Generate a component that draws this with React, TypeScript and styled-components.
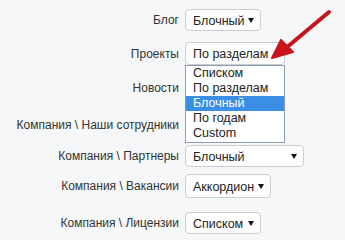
import React from "react";
import styled, { createGlobalStyle } from "styled-components";

const Global = createGlobalStyle`
  html, body {
    margin: 0;
    padding: 0;
    background: #f5f7f8;
    font-family: "Liberation Sans", Arial, sans-serif;
  }
`;

const Page = styled.div`
  position: relative;
  width: 345px;
  height: 240px;
  overflow: hidden;
  background: #f5f7f8;
`;

const Form = styled.div`
  display: flex;
  flex-direction: column;
`;

const Row = styled.div<{ $mt: number; $h?: number }>`
  display: grid;
  grid-template-columns: 179px auto;
  column-gap: 6px;
  align-items: center;
  margin-top: ${(p) => p.$mt}px;
  height: ${(p) => p.$h ?? 22}px;
`;

const Label = styled.div`
  text-align: right;
  font-size: 12px;
  color: #333;
  white-space: nowrap;
`;

const Field = styled.div`
  position: relative;
  justify-self: start;
`;

const Select = styled.div<{ $w: number; $h?: number }>`
  box-sizing: border-box;
  width: ${(p) => p.$w}px;
  height: ${(p) => p.$h ?? 22}px;
  border: 1px solid #c9cdd1;
  border-radius: 4px;
  background: #fff;
  display: flex;
  align-items: center;
  justify-content: space-between;
  padding: 1px 6px 0 7px;
  font-size: 12.5px;
  color: #222;
  white-space: nowrap;
`;

const Caret = styled.span`
  width: 0;
  height: 0;
  border-left: 3px solid transparent;
  border-right: 3px solid transparent;
  border-top: 5px solid #111;
`;

const List = styled.ul`
  position: absolute;
  left: 0;
  top: 23px;
  box-sizing: border-box;
  width: 100px;
  margin: 0;
  padding: 0 0 1px;
  list-style: none;
  background: #fff;
  border: 1px solid #8a9bb0;
  z-index: 2;
`;

const Item = styled.li<{ $active?: boolean }>`
  height: 15px;
  line-height: 15px;
  padding-left: 7px;
  font-size: 12.5px;
  color: ${(p) => (p.$active ? "#fff" : "#222")};
  background: ${(p) => (p.$active ? "#3a8ee6" : "transparent")};
`;

const Arrow = styled.svg`
  position: absolute;
  left: 268px;
  top: 5px;
  z-index: 3;
`;

const options = ["Списком", "По разделам", "Блочный", "По годам", "Custom"];

export default function App() {
  return (
    <Page>
      <Global />
      <Form>
        <Row $mt={9}>
          <Label>Блог</Label>
          <Field>
            <Select $w={76}>
              Блочный <Caret />
            </Select>
          </Field>
        </Row>
        <Row $mt={11}>
          <Label>Проекты</Label>
          <Field>
            <Select $w={100} $h={23}>По разделам</Select>
            <List>
              {options.map((o) => (
                <Item key={o} $active={o === "Блочный"}>
                  {o}
                </Item>
              ))}
            </List>
          </Field>
        </Row>
        <Row $mt={13}>
          <Label>Новости</Label>
          <Field>
            <Select $w={76} />
          </Field>
        </Row>
        <Row $mt={15}>
          <Label>Компания \ Наши сотрудники</Label>
          <Field>
            <Select $w={100} />
          </Field>
        </Row>
        <Row $mt={9}>
          <Label>Компания \ Партнеры</Label>
          <Field>
            <Select $w={119}>
              Блочный <Caret />
            </Select>
          </Field>
        </Row>
        <Row $mt={7} $h={24}>
          <Label>Компания \ Вакансии</Label>
          <Field>
            <Select $w={86} $h={24}>
              Аккордион <Caret />
            </Select>
          </Field>
        </Row>
        <Row $mt={14}>
          <Label>Компания \ Лицензии</Label>
          <Field>
            <Select $w={76}>
              Списком <Caret />
            </Select>
          </Field>
        </Row>
      </Form>
      <Arrow width="66" height="60" viewBox="0 0 66 60">
        <line x1="61" y1="7" x2="18" y2="43" stroke="#c8141c" strokeWidth="4" strokeLinecap="round" />
        <polygon points="4,53 13,35 25,47" fill="#c8141c" stroke="#c8141c" strokeWidth="2" strokeLinejoin="round" />
      </Arrow>
    </Page>
  );
}
